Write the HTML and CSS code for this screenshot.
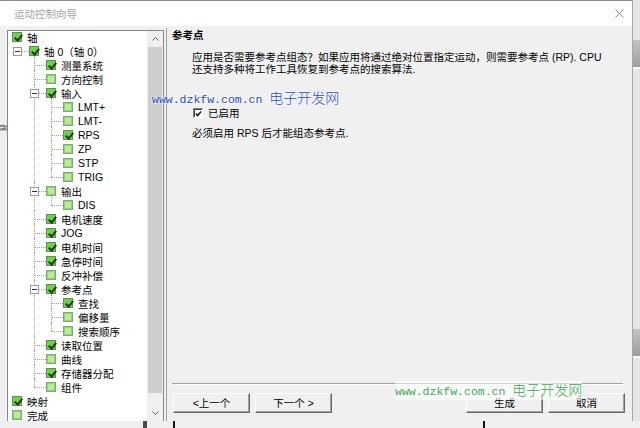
FILE: index.html
```html
<!DOCTYPE html>
<html>
    <head>
        <meta charset='utf-8'>
        <title>运动控制向导</title>
        <link rel="stylesheet" href="styles.css">
    </head>
    <body>
        <div class='screen'>
            <div class='top-area'>
                <div class='wizard'>
                    <div class='title-bar'>
                        <span class='title'>运动控制向导</span>
                        <svg class='close' width='9' height='9' viewBox='0 0 9 9'>
                            <path d='M0.5 0.5 L8.5 8.5 M8.5 0.5 L0.5 8.5' stroke='#8a8a8a' stroke-width='1' fill='none'/>
                        </svg>
                    </div>
                    <div class='wizard-body'>
                        <div class='gutter'><span class='stray'>器</span></div>
                        <div class='tree-box'>
                            <ul class='tree'>
                                <li>
                                    <div class='row'><i class='cb on'></i>轴</div>
                                    <ul>
                                        <li>
                                            <div class='row'><b class='exp'></b><i class='cb on'></i>轴 0（轴 0）</div>
                                            <ul>
                                                <li><div class='row'><i class='cb on'></i>测量系统</div></li>
                                                <li><div class='row'><i class='cb'></i>方向控制</div></li>
                                                <li>
                                                    <div class='row'><b class='exp'></b><i class='cb on'></i>输入</div>
                                                    <ul>
                                                        <li><div class='row'><i class='cb'></i>LMT+</div></li>
                                                        <li><div class='row'><i class='cb'></i>LMT-</div></li>
                                                        <li><div class='row'><i class='cb on'></i>RPS</div></li>
                                                        <li><div class='row'><i class='cb'></i>ZP</div></li>
                                                        <li><div class='row'><i class='cb'></i>STP</div></li>
                                                        <li><div class='row'><i class='cb'></i>TRIG</div></li>
                                                    </ul>
                                                </li>
                                                <li>
                                                    <div class='row'><b class='exp'></b><i class='cb'></i>输出</div>
                                                    <ul>
                                                        <li><div class='row'><i class='cb'></i>DIS</div></li>
                                                    </ul>
                                                </li>
                                                <li><div class='row'><i class='cb on'></i>电机速度</div></li>
                                                <li><div class='row'><i class='cb on'></i>JOG</div></li>
                                                <li><div class='row'><i class='cb on'></i>电机时间</div></li>
                                                <li><div class='row'><i class='cb on'></i>急停时间</div></li>
                                                <li><div class='row'><i class='cb'></i>反冲补偿</div></li>
                                                <li>
                                                    <div class='row'><b class='exp'></b><i class='cb on'></i>参考点</div>
                                                    <ul>
                                                        <li><div class='row'><i class='cb on'></i>查找</div></li>
                                                        <li><div class='row'><i class='cb'></i>偏移量</div></li>
                                                        <li><div class='row'><i class='cb'></i>搜索顺序</div></li>
                                                    </ul>
                                                </li>
                                                <li><div class='row'><i class='cb on'></i>读取位置</div></li>
                                                <li><div class='row'><i class='cb'></i>曲线</div></li>
                                                <li><div class='row'><i class='cb on'></i>存储器分配</div></li>
                                                <li><div class='row'><i class='cb'></i>组件</div></li>
                                            </ul>
                                        </li>
                                    </ul>
                                </li>
                                <li><div class='row'><i class='cb on'></i>映射</div></li>
                                <li><div class='row'><i class='cb'></i>完成</div></li>
                            </ul>
                            <div class='scrollbar'>
                                <div class='arrow'>
                                    <svg width='7' height='4' viewBox='0 0 7 4'><path d='M0.5 3.5 L3.5 0.5 L6.5 3.5' stroke='#606060' fill='none'/></svg>
                                </div>
                                <div class='thumb'></div>
                                <div class='arrow'>
                                    <svg width='7' height='4' viewBox='0 0 7 4'><path d='M0.5 0.5 L3.5 3.5 L6.5 0.5' stroke='#606060' fill='none'/></svg>
                                </div>
                            </div>
                        </div>
                        <div class='page'>
                            <h3>参考点</h3>
                            <p class='desc'>应用是否需要参考点组态？如果应用将通过绝对位置指定运动，则需要参考点 (RP). CPU<br>还支持多种将工作工具恢复到参考点的搜索算法.</p>
                            <label class='enable'>
                                <span class='classic-cb'>
                                    <svg width='8' height='8' viewBox='0 0 8 8'><path d='M1 3.5 L3 5.8 L7 1.2' stroke='#111' stroke-width='1.6' fill='none'/></svg>
                                </span>
                                已启用
                            </label>
                            <p class='note'>必须启用 RPS 后才能组态参考点.</p>
                            <div class='footer'>
                                <div class='sep'></div>
                                <div class='buttons'>
                                    <button class='btn'>&lt;上一个</button>
                                    <button class='btn'>下一个 &gt;</button>
                                    <span class='spacer'></span>
                                    <button class='btn'>生成</button>
                                    <button class='btn'>取消</button>
                                </div>
                            </div>
                            <div class='mark mark-blue'>www.dzkfw.com.cn <span>电子开发网</span></div>
                            <div class='mark mark-green'>www.dzkfw.com.cn <span>电子开发网</span></div>
                        </div>
                    </div>
                </div>
                <div class='side-strip'>
                    <div class='band top-band'></div>
                    <div class='band low-band'></div>
                </div>
            </div>
            <div class='bottom-strip'>
                <span class='stub stub-a'></span>
                <span class='stub stub-b'></span>
                <span class='stub stub-c'></span>
            </div>
        </div>
    </body>
</html>
```

FILE: styles.css
```css
*{
    box-sizing: border-box;
}
body{
    margin: 0;
    background: #ececec;
    font-family: "Liberation Sans", "Noto Sans CJK SC", sans-serif;
    font-size: 10.5px;
    color: #000;
}

.screen{
    width: 640px;
    height: 428px;
    display: flex;
    flex-direction: column;
    overflow: hidden;
}
.top-area{
    display: flex;
    height: 421px;
}

/* dialog */
.wizard{
    width: 633px;
    display: flex;
    flex-direction: column;
    background: #f0f0f0;
    border-top: 1px solid #8c8c8c;
    border-right: 1px solid #a8a8a8;
}
.title-bar{
    height: 25px;
    background: #fff;
    display: flex;
    align-items: center;
    justify-content: space-between;
    padding: 0 8px 0 14px;
}
.title{
    color: #a5a5a5;
    line-height: 14px;
}
.wizard-body{
    flex: 1;
    display: flex;
    min-height: 0;
}
.gutter{
    width: 7px;
    padding-top: 98px;
    overflow: hidden;
}
.stray{
    display: block;
    font-size: 7px;
    line-height: 7px;
    color: #555;
    transform: rotate(90deg);
}

/* tree */
.tree-box{
    width: 157px;
    margin-top: 4px;
    border: 1px solid #828790;
    border-bottom: none;
    background: #fff;
    display: flex;
}
.tree, .tree ul{
    list-style: none;
    margin: 0;
    padding: 0;
}
.tree{
    flex: 1;
    margin-top: -1px;
    font-size: 10.5px;
}
.tree ul{
    padding-left: 17px;
}
.tree li{
    position: relative;
}
.tree ul li::after{
    content: "";
    position: absolute;
    left: -8px;
    top: 7px;
    width: 12px;
    border-top: 1px dotted #a0a0a0;
}
.tree ul ul li::before{
    content: "";
    position: absolute;
    left: -8px;
    top: -2px;
    bottom: 0;
    border-left: 1px dotted #a0a0a0;
}
.tree ul ul li:last-child::before{
    bottom: auto;
    height: 9px;
}
.row{
    position: relative;
    z-index: 1;
    height: 14px;
    display: flex;
    align-items: center;
    padding-left: 4px;
    white-space: nowrap;
}
.exp{
    position: absolute;
    left: -12px;
    top: 3px;
    width: 9px;
    height: 9px;
    border: 1px solid #9a9a9a;
    background: #fff;
}
.exp::after{
    content: "";
    position: absolute;
    left: 1px;
    top: 3px;
    width: 5px;
    border-top: 1px solid #333;
}
.cb{
    position: relative;
    width: 10px;
    height: 10px;
    margin-right: 5px;
    flex: none;
    border: 1px solid #7fa77a;
    background: #b9ea9c;
    box-shadow: inset 0 0 0 1px #8fd86c;
}
.cb.on{
    background: #6fd04c;
    box-shadow: none;
    border-color: #5f8f55;
}
.cb.on::after{
    content: "";
    position: absolute;
    left: 2.5px;
    top: 0;
    width: 3px;
    height: 6px;
    border: solid #1d3d12;
    border-width: 0 2px 2px 0;
    transform: rotate(40deg);
}

.scrollbar{
    width: 16px;
    display: flex;
    flex-direction: column;
    background: #f0f0f0;
}
.arrow{
    height: 16px;
    display: flex;
    align-items: center;
    justify-content: center;
}
.thumb{
    flex: 1;
    margin: 0 1px 12px 1px;
    background: #cdcdcd;
}

/* page */
.page{
    flex: 1;
    position: relative;
    margin: 2px 0 0 2px;
    border-left: 1px solid #a0a0a0;
    display: flex;
    flex-direction: column;
    padding: 0 7px 8px 5px;
}
.page h3{
    margin: 0;
    font-size: 10.5px;
    line-height: 14px;
    font-weight: bold;
}
.desc{
    margin: 9px 0 0 20px;
    line-height: 12px;
}
.enable{
    margin: 31px 0 0 21px;
    display: flex;
    align-items: center;
    gap: 5px;
    line-height: 14px;
}
.classic-cb{
    width: 10px;
    height: 10px;
    border: 1px solid #fff;
    border-top-color: #808080;
    border-left-color: #808080;
    box-shadow: inset 1px 1px 0 #404040;
    background: #fff;
    display: flex;
    align-items: center;
    justify-content: center;
    padding: 1px 0 0 1px;
}
.note{
    margin: 7px 0 0 20px;
    line-height: 12px;
}
.footer{
    margin-top: auto;
}
.sep{
    height: 2px;
    margin-right: 2px;
    border-top: 1px solid #a0a0a0;
    border-bottom: 1px solid #fff;
}
.buttons{
    display: flex;
    gap: 5px;
    margin-top: 8px;
    padding-left: 1px;
}
.spacer{
    flex: 1;
}
.btn{
    width: 77px;
    height: 20px;
    padding: 0;
    font: inherit;
    line-height: 14px;
    background: #f0f0f0;
    border: 1px solid #fff;
    border-right-color: #696969;
    border-bottom-color: #696969;
    box-shadow: inset -1px -1px 0 #a0a0a0;
}

/* watermarks */
.mark{
    position: absolute;
    z-index: 2;
    white-space: nowrap;
    font-family: "Liberation Mono", monospace;
    font-size: 11.5px;
    line-height: 16px;
    text-shadow: 0 0 2px #fff, 0 0 3px #fff;
}
.mark span{
    font-family: "Noto Sans CJK SC", sans-serif;
    font-size: 14px;
    font-weight: 300;
}
.mark-blue{
    left: -15px;
    top: 61px;
    color: #2848c8;
}
.mark-green{
    left: 228px;
    top: 353px;
    color: #3aa850;
    background: rgba(255, 255, 255, 0.55);
}

/* surroundings */
.side-strip{
    flex: 1;
    display: flex;
    flex-direction: column;
    background: #e6e6e6;
}
.band{
    height: 29px;
    background: linear-gradient(#c4c4c4, #9c9c9c);
    border-bottom: 2px solid #fff;
}
.top-band{
    margin-top: 40px;
}
.low-band{
    margin-top: 260px;
}
.bottom-strip{
    flex: 1;
    display: flex;
    background: #efefef;
}
.stub{
    width: 2px;
    background: #111;
}
.stub-a{
    width: 4px;
    margin-left: 143px;
    background: #4a4a4a;
}
.stub-b{
    margin-left: 26px;
}
.stub-c{
    margin-left: 308px;
}
```
